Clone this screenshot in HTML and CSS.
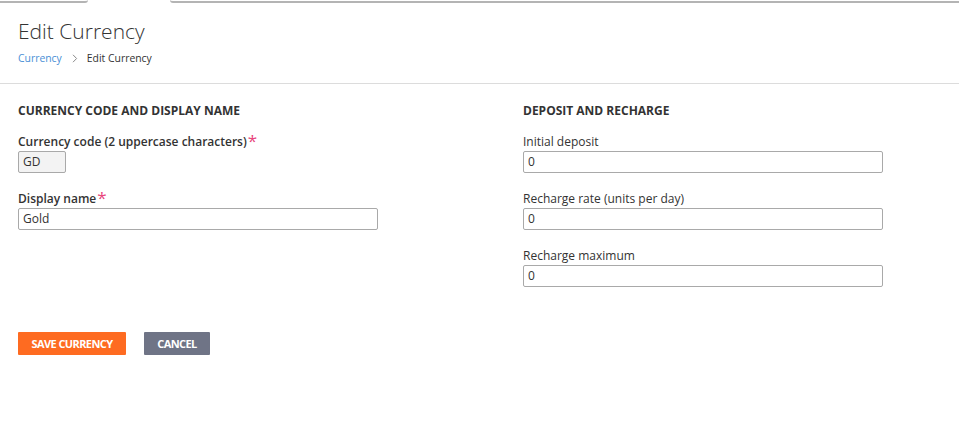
FILE: index.html
```html
<!DOCTYPE html>
<html>
<head>
<meta charset="utf-8">
<link rel="stylesheet" href="styles.css">
</head>
<body>
<div class="tabs">
  <div class="tab-left"></div>
  <div class="tab-active"></div>
  <div class="tab-right"></div>
</div>
<header class="page-header">
  <h1 class="title">Edit Currency</h1>
  <nav class="crumbs">
    <a class="crumb-link">Currency</a>
    <svg class="chev" width="6" height="9" viewBox="0 0 6 9"><path d="M1 0.8 L4.6 4.5 L1 8.2" fill="none" stroke="#8a8a8a" stroke-width="1"/></svg>
    <span class="crumb-current">Edit Currency</span>
  </nav>
</header>
<main class="form">
  <div class="columns">
    <section class="col">
      <h2 class="section-title">CURRENCY CODE AND DISPLAY NAME</h2>
      <div class="field">
        <label class="label strong">Currency code (2 uppercase characters)<span class="req">*</span></label>
        <div class="input input-code disabled">GD</div>
      </div>
      <div class="field">
        <label class="label strong">Display name<span class="req">*</span></label>
        <div class="input">Gold</div>
      </div>
    </section>
    <section class="col">
      <h2 class="section-title">DEPOSIT AND RECHARGE</h2>
      <div class="field">
        <label class="label">Initial deposit</label>
        <div class="input">0</div>
      </div>
      <div class="field">
        <label class="label">Recharge rate (units per day)</label>
        <div class="input">0</div>
      </div>
      <div class="field">
        <label class="label">Recharge maximum</label>
        <div class="input">0</div>
      </div>
    </section>
  </div>
  <div class="actions">
    <button class="btn btn-save">SAVE CURRENCY</button>
    <button class="btn btn-cancel">CANCEL</button>
  </div>
</main>
</body>
</html>
```
FILE: styles.css
```css
* { box-sizing: border-box; }
html, body { margin: 0; padding: 0; background: #fff; }
body {
  font-family: "Open Sans", "Noto Sans", sans-serif;
  color: #333;
  font-size: 12px;
}
.tabs { display: flex; height: 3px; }
.tab-left {
  width: 88px;
  border-bottom: 2px solid #b4b4b4;
  border-bottom-right-radius: 3px;
}
.tab-active { width: 82px; }
.tab-right {
  flex: 1;
  border-bottom: 2px solid #b4b4b4;
  border-bottom-left-radius: 3px;
}
.page-header {
  padding: 13px 18px 0;
  height: 81px;
  border-bottom: 1px solid #dcdcdc;
}
.title {
  margin: 0;
  font-size: 21px;
  font-weight: 300;
  line-height: 30px;
  color: #333;
}
.crumbs {
  display: flex;
  align-items: center;
  margin-top: 4px;
  font-size: 10.4px;
  line-height: 16px;
}
.crumb-link { color: #4a8fd6; }
.chev { margin: 0 9px 0 10px; }
.crumb-current { color: #333; }
.form { padding: 18px 18px 0; }
.columns { display: grid; grid-template-columns: 505px 1fr; }
.section-title {
  margin: 0 0 14px;
  font-size: 12px;
  font-weight: 700;
  line-height: 17px;
  color: #333;
}
.field { margin-bottom: 17px; }
.label {
  display: block;
  line-height: 17px;
  margin-bottom: 1px;
  font-size: 12px;
}
.label.strong { font-weight: 600; }
.req { color: #e8457c; font-size: 17px; font-weight: 400; line-height: 10px; vertical-align: -1px; margin-left: 1px; }
.input {
  width: 360px;
  height: 22px;
  border: 1px solid #a9a9a9;
  border-radius: 2px;
  padding: 0 4px;
  line-height: 20px;
  font-size: 12px;
  color: #333;
}
.input-code { width: 48px; }
.disabled { background: #f3f3f3; }
.actions { display: flex; gap: 18px; margin-top: 28px; }
.btn {
  height: 23px;
  border: 0;
  border-radius: 1px;
  color: #fff;
  font-family: "Open Sans", sans-serif;
  font-weight: 700;
  font-size: 11px;
  letter-spacing: -0.6px;
  padding: 0 13px;
}
.btn-save { background: #fe6b21; width: 108px; }
.btn-cancel { background: #6f7486; width: 66px; }
```
